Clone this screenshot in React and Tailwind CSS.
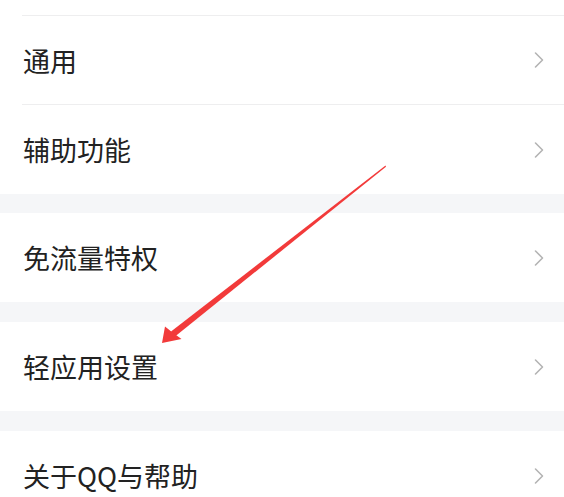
import React from "react";

function Chevron() {
  return (
    <svg width="12" height="18" viewBox="0 0 12 18" className="shrink-0">
      <path d="M2.5 2 L9.5 9 L2.5 16" fill="none" stroke="#b4b4b4" strokeWidth="1.6" strokeLinecap="round" strokeLinejoin="round" />
    </svg>
  );
}

function Row({ label, h = "h-[89px]" }) {
  return (
    <div className={`flex items-center justify-between bg-white pl-[23px] pr-[19px] ${h}`}>
      <span className="text-[27px] leading-none text-[#222222]">{label}</span>
      <Chevron />
    </div>
  );
}

function Sep() {
  return (
    <div className="bg-white pl-[22px]">
      <div className="h-px bg-[#eeeeef]" />
    </div>
  );
}

function Gap() {
  return <div className="h-5 bg-[#f5f6f8]" />;
}

export default function App() {
  return (
    <div
      className="relative w-[564px] h-[497px] overflow-hidden bg-white"
      style={{ fontFamily: '"Noto Sans CJK SC", "Noto Sans", sans-serif' }}
    >
      <div className="h-[15px] bg-white" />
      <Sep />
      <Row label="通用" h="h-[88px]" />
      <Sep />
      <Row label="辅助功能" />
      <div className="h-[19px] bg-[#f5f6f8]" />
      <Row label="免流量特权" />
      <Gap />
      <Row label="轻应用设置" />
      <Gap />
      <Row label="关于QQ与帮助" />

      <svg className="absolute left-0 top-0 pointer-events-none" width="564" height="497" viewBox="0 0 564 497">
        <polygon points="385.5,165.5 386,166.8 175,336.5 171,331.5" fill="#f23a3a" />
        <polygon points="162,343 165,326.5 172.5,332.5 181.5,339" fill="#f23a3a" />
      </svg>
    </div>
  );
}
